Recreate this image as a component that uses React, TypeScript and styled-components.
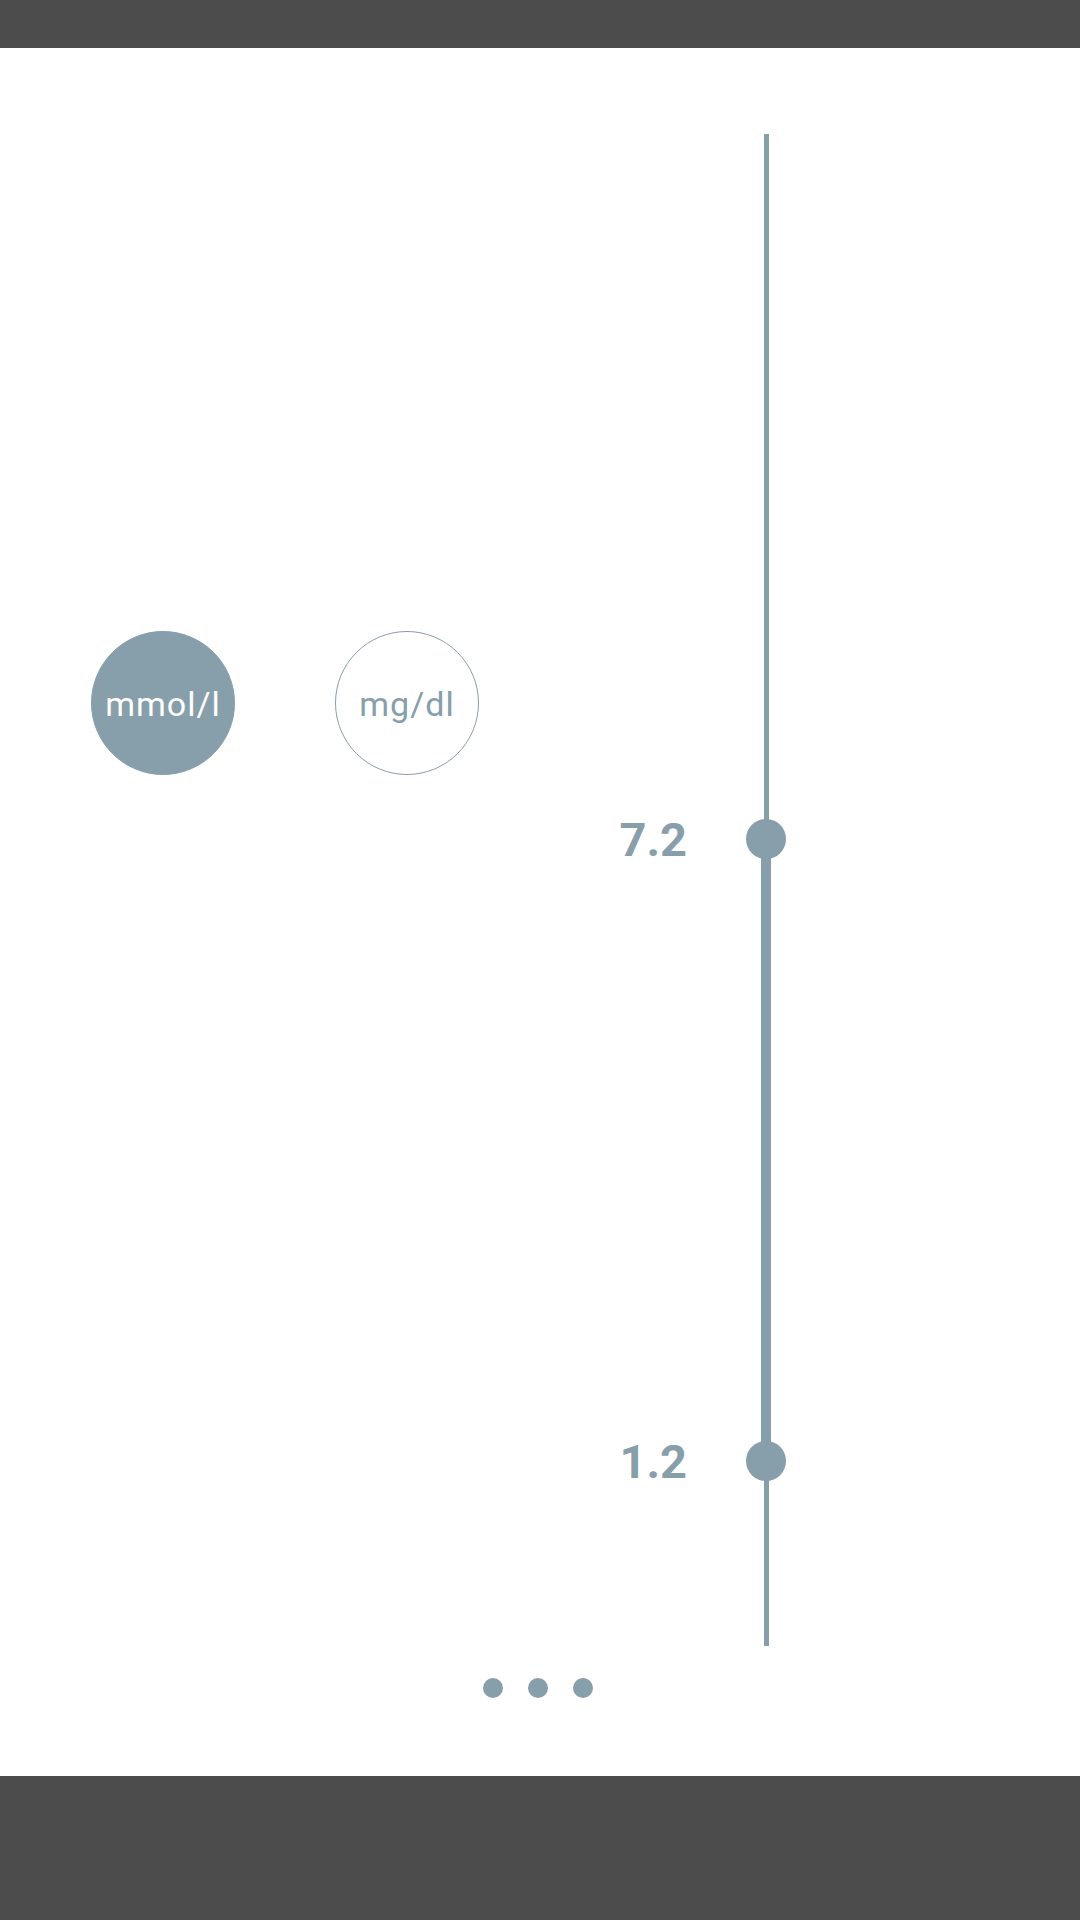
import React from "react";
import styled, { createGlobalStyle } from "styled-components";

const ACCENT = "#879eab";
const BAR = "#4c4c4c";

const SCALE_MIN = 0;
const SCALE_MAX = 14;

interface $Props {
  low: number;
  high: number;
}

const toTop = (value: number) =>
  ((SCALE_MAX - value) / (SCALE_MAX - SCALE_MIN)) * 100;

const RangeSlider = ({ low, high }: $Props) => {
  const top = toTop(high);
  const bottom = toTop(low);
  return (
    <Track>
      <Scale>
        <Range style={{ top: top + "%", height: bottom - top + "%" }} />
        {[high, low].map((value: number, index: number) => {
          return (
            <Handle key={index} style={{ top: toTop(value) + "%" }}>
              <HandleLabel>{value.toFixed(1)}</HandleLabel>
              <Knob />
            </Handle>
          );
        })}
      </Scale>
    </Track>
  );
};

const App = () => {
  return (
    <>
      <GlobalStyle />
      <Screen>
        <StatusBar />
        <Content>
          <SettingsRow>
            <UnitPanel>
              <UnitButton $active>mmol/l</UnitButton>
              <UnitButton>mg/dl</UnitButton>
            </UnitPanel>
            <SliderColumn>
              <RangeSlider low={1.2} high={7.2} />
            </SliderColumn>
          </SettingsRow>
          <Pager>
            <PageDot />
            <PageDot />
            <PageDot />
          </Pager>
        </Content>
        <NavBar />
      </Screen>
    </>
  );
};

export default App;

const GlobalStyle = createGlobalStyle`
  html, body {
    margin: 0;
    padding: 0;
    background: #ffffff;
    font-family: Roboto, "Liberation Sans", sans-serif;
  }
`;

const Screen = styled.div`
  width: 1080px;
  height: 1920px;
  display: flex;
  flex-direction: column;
  overflow: hidden;
  background: #ffffff;
`;

const StatusBar = styled.div`
  height: 48px;
  flex: 0 0 auto;
  background: ${BAR};
`;

const NavBar = styled.div`
  height: 144px;
  flex: 0 0 auto;
  background: ${BAR};
`;

const Content = styled.div`
  flex: 1 1 auto;
  display: flex;
  flex-direction: column;
  padding-top: 86px;
`;

const SettingsRow = styled.div`
  display: flex;
  align-items: flex-start;
  height: 1512px;
`;

const UnitPanel = styled.div`
  display: flex;
  gap: 100px;
  padding-left: 91px;
  padding-top: 497px;
`;

const UnitButton = styled.div<{ $active?: boolean }>`
  width: 144px;
  height: 144px;
  box-sizing: border-box;
  border-radius: 50%;
  display: flex;
  align-items: center;
  justify-content: center;
  font-size: 34px;
  letter-spacing: 1px;
  padding-top: 2px;
  background: ${({ $active }) => ($active ? ACCENT : "#ffffff")};
  color: ${({ $active }) => ($active ? "#ffffff" : ACCENT)};
  border: 1px solid ${ACCENT};
`;

const SliderColumn = styled.div`
  margin-left: auto;
  margin-right: 309px;
  width: 10px;
  height: 100%;
`;

const Track = styled.div`
  position: relative;
  width: 10px;
  height: 100%;
  display: flex;
  flex-direction: column;
  padding-bottom: 61px;
  box-sizing: border-box;

  &::before {
    content: "";
    position: absolute;
    left: 2.5px;
    top: 0;
    bottom: 0;
    width: 5px;
    background: ${ACCENT};
  }
`;

const Scale = styled.div`
  position: relative;
  flex: 1 1 auto;
`;

const Range = styled.div`
  position: absolute;
  left: 0;
  width: 10px;
  background: ${ACCENT};
`;

const Handle = styled.div`
  position: absolute;
  left: 50%;
  width: 0;
  height: 0;
`;

const Knob = styled.div`
  position: absolute;
  left: -20px;
  top: -20px;
  width: 40px;
  height: 40px;
  border-radius: 50%;
  background: ${ACCENT};
`;

const HandleLabel = styled.div`
  position: absolute;
  right: 79px;
  top: -22px;
  font-size: 47px;
  line-height: 46px;
  font-weight: 700;
  color: ${ACCENT};
  white-space: nowrap;
`;

const Pager = styled.div`
  display: flex;
  justify-content: center;
  gap: 25px;
  margin-top: 32px;
  padding-right: 5px;
`;

const PageDot = styled.div`
  width: 20px;
  height: 20px;
  border-radius: 50%;
  background: ${ACCENT};
`;
